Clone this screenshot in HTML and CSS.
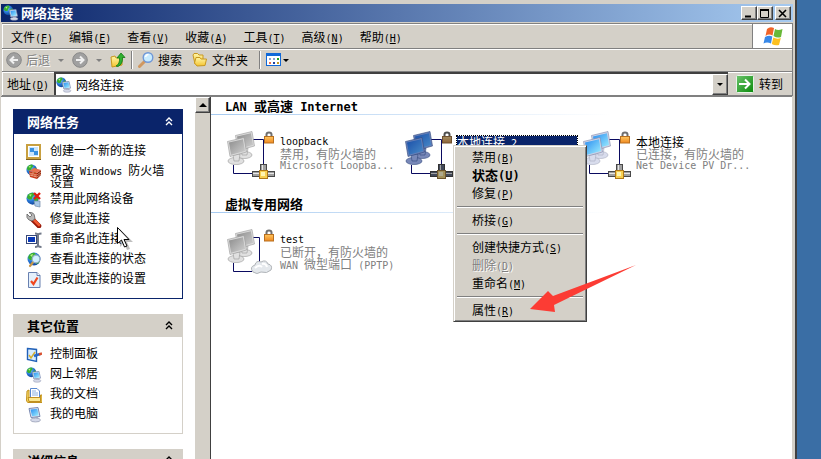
FILE: index.html
```html
<!DOCTYPE html>
<html lang="zh-CN">

<head>
    <meta charset="UTF-8">
    <meta name="viewport" content="width=device-width, initial-scale=1.0">
    <title>网络连接</title>
    <link rel="stylesheet" href="styles.css">
</head>

<body>
    <svg class="defs" width="0" height="0" aria-hidden="true">
        <defs>
            <radialGradient id="g-globe" cx="35%" cy="30%" r="80%">
                <stop offset="0" stop-color="#8fd4ff" />
                <stop offset="0.5" stop-color="#2878d8" />
                <stop offset="1" stop-color="#0b3a8c" />
            </radialGradient>
            <linearGradient id="g-on" x1="0" y1="0" x2="1" y2="1">
                <stop offset="0" stop-color="#2a8cf0" />
                <stop offset="1" stop-color="#9ff0ff" />
            </linearGradient>
            <linearGradient id="g-off" x1="0" y1="0" x2="1" y2="1">
                <stop offset="0" stop-color="#8c8c8c" />
                <stop offset="1" stop-color="#d0d0d0" />
            </linearGradient>
            <linearGradient id="g-sel" x1="0" y1="0" x2="1" y2="1">
                <stop offset="0" stop-color="#1a4ea8" />
                <stop offset="1" stop-color="#4a8cc8" />
            </linearGradient>
            <linearGradient id="g-lock" x1="0" y1="0" x2="0" y2="1">
                <stop offset="0" stop-color="#ffc860" />
                <stop offset="1" stop-color="#f08820" />
            </linearGradient>
            <linearGradient id="g-folder" x1="0" y1="0" x2="0" y2="1">
                <stop offset="0" stop-color="#fff6a8" />
                <stop offset="1" stop-color="#f4c430" />
            </linearGradient>
            <linearGradient id="g-go" x1="0" y1="0" x2="1" y2="1">
                <stop offset="0" stop-color="#6cc46c" />
                <stop offset="1" stop-color="#0a8a0a" />
            </linearGradient>
            <symbol id="globe" viewBox="0 0 16 16">
                <circle cx="7" cy="7" r="6.5" fill="url(#g-globe)" />
                <path d="M2 3Q5 0 8 1L9 3 7 5 6 8 3 8 1 6ZM9 7L12 4 13 7 12 11 9 12Z" fill="#38b030" />
                <path d="M3 3L6 2 5 5Z" fill="#b8f080" />
            </symbol>
            <symbol id="pc" viewBox="0 0 16 16">
                <path d="M3 1.500L12 0.500 14 9.500 5 10.500Z" fill="#e4e8f4" stroke="#7888b0" />
                <path d="M4.500 2.500L11.300 1.800 12.800 8.500 6 9.300Z" fill="url(#g-on)" />
                <path d="M8 10L12 10 12 12 8 12Z" fill="#a8b0c8" />
                <ellipse cx="9.500" cy="13" rx="5" ry="2" fill="#d4d8e8" stroke="#8890a8" stroke-width="0.6" />
            </symbol>
            <symbol id="net" viewBox="0 0 16 16">
                <use href="#globe" width="12" height="12" />
                <use href="#pc" x="4" y="4" width="12" height="12" />
            </symbol>
            <!-- one monitor of the big adapter icon, coloured from the css -->
            <symbol id="monitor" viewBox="0 0 20 28">
                <ellipse cx="9" cy="24" rx="8" ry="3.600" class="base" />
                <path d="M6 18L13 17 12 24 7 24Z" class="base" />
                <path d="M0.500 4.500L17 0.500 19.500 15 3 19.500Z" class="frame" />
                <path d="M2 5.500L16 2.200 18 14 4 17.700Z" class="screen" />
            </symbol>
            <symbol id="monitors" viewBox="0 0 50 52">
                <use href="#monitor" x="8" y="0" width="20" height="28" />
                <use href="#monitor" x="0" y="6" width="20" height="28" />
            </symbol>
            <symbol id="pair" viewBox="0 0 50 52">
                <path d="M26 8.500H36.500V36M6.500 34V42.500H25" class="wire" />
                <use href="#monitors" width="50" height="52" />
            </symbol>
            <symbol id="lock" viewBox="0 0 10 13">
                <path d="M2.500 6V3.500Q2.500 1.500 5 1.500T7.500 3.500V6" fill="none" stroke="#707070" stroke-width="2" />
                <rect x="0.500" y="5.500" width="9" height="6.500" fill="url(#g-lock)" stroke="#b87020" />
            </symbol>
            <symbol id="plug" viewBox="0 0 24 16">
                <rect x="8.500" y="0.500" width="6" height="8" class="metal" />
                <rect x="0.500" y="7.500" width="22" height="5" class="metal" />
                <path d="M1 9.500H22M10.500 1V7" class="shine" />
                <rect x="7.500" y="6.500" width="8" height="8" fill="#f8d050" stroke="#b07818" />
                <rect x="9" y="8" width="4" height="4" fill="#fff4b0" />
            </symbol>
        </defs>
    </svg>

    <div class="window">
        <header class="title">
            <svg class="i16"><use href="#net" /></svg>
            <h1>网络连接</h1>
            <div class="title-btns">
                <button type="button" aria-label="最小化"><svg width="10" height="9"><path d="M1 7.500H7" stroke="#000" stroke-width="2" /></svg></button>
                <button type="button" aria-label="最大化"><svg width="10" height="9"><path d="M0.500 0V8.500H8.500V0M0 1H9" fill="none" stroke="#000" /><path d="M0 1H9" stroke="#000" stroke-width="2" /></svg></button>
                <button type="button" class="close" aria-label="关闭"><svg width="10" height="9"><path d="M1 1L8 8M8 1L1 8" stroke="#000" stroke-width="1.6" /></svg></button>
            </div>
        </header>

        <div class="menubar">
            <nav>
                <a href="#">文件<span class="en">(<u>F</u>)</span></a>
                <a href="#">编辑<span class="en">(<u>E</u>)</span></a>
                <a href="#">查看<span class="en">(<u>V</u>)</span></a>
                <a href="#">收藏<span class="en">(<u>A</u>)</span></a>
                <a href="#">工具<span class="en">(<u>T</u>)</span></a>
                <a href="#">高级<span class="en">(<u>N</u>)</span></a>
                <a href="#">帮助<span class="en">(<u>H</u>)</span></a>
            </nav>
            <div class="flag">
                <svg width="20" height="20" viewBox="0 0 20 20">
                    <path d="M4 3Q7 0 11 2L9.500 9.500Q6 7.500 2.500 10Z" fill="#f06428" />
                    <path d="M12 3Q15 5 19.500 3L18 11Q14 12.500 10.500 10Z" fill="#68b838" />
                    <path d="M2 11Q6 9 9.300 10.500L8 17.500Q4 15.500 0.500 17.500Z" fill="#3888e8" />
                    <path d="M10.300 11.500Q14 13.500 17.800 12L16 19Q12 20 8.800 18Z" fill="#fcc020" />
                </svg>
            </div>
        </div>

        <div class="toolbar">
            <button type="button" class="disabled" disabled>
                <svg class="i16" viewBox="0 0 16 16"><circle cx="8" cy="8" r="7.300" fill="#a0a0a0" stroke="#888" /><path d="M12 8H5M8 4.500L4.500 8 8 11.500" fill="none" stroke="#f0f0f0" stroke-width="2" /></svg>
                <span>后退</span>
            </button>
            <i class="drop grey"></i>
            <button type="button" class="fwd" disabled aria-label="前进">
                <svg class="i16" viewBox="0 0 16 16"><circle cx="8" cy="8" r="7.300" fill="#a0a0a0" stroke="#888" /><path d="M4 8H11M8 4.500L11.500 8 8 11.500" fill="none" stroke="#f0f0f0" stroke-width="2" /></svg>
            </button>
            <i class="drop grey"></i>
            <button type="button" class="up" aria-label="向上">
                <svg class="i16" viewBox="0 0 16 16">
                    <path d="M1 5L5 4 6 6 12 5 12 13 2 15Z" fill="url(#g-folder)" stroke="#c89820" />
                    <path d="M6 14Q10 12 9.500 6H7L11 1 15 5.500H12.500Q13 12 8 14.500Z" fill="#30b030" stroke="#107810" stroke-width="0.8" />
                </svg>
            </button>
            <i class="sep"></i>
            <button type="button" class="search">
                <svg class="i16" viewBox="0 0 16 16"><path d="M7 9L1.500 14.500" stroke="#d09860" stroke-width="3" stroke-linecap="round" /><circle cx="10" cy="5.500" r="4.800" fill="#c8ecff" stroke="#7098d8" stroke-width="1.400" /><path d="M7.500 5Q8 2.500 10.500 2.500" fill="none" stroke="#fff" stroke-width="1.500" /></svg>
                <span>搜索</span>
            </button>
            <button type="button" class="folders">
                <svg class="i16" viewBox="0 0 16 16">
                    <path d="M1 3L2 1.500H5.500L7 3H11V10L3 12Z" fill="url(#g-folder)" stroke="#c89820" />
                    <path d="M4 5.500H8L9 7H14.500L13 13.500 5 14 2.500 11Z" fill="url(#g-folder)" stroke="#c89820" />
                </svg>
                <span>文件夹</span>
            </button>
            <i class="sep"></i>
            <button type="button" class="view" aria-label="查看方式">
                <svg class="i16" viewBox="0 0 16 16">
                    <rect x="0.500" y="1.500" width="14" height="12" fill="#fff" stroke="#1068d8" />
                    <rect x="0" y="1" width="15" height="3" fill="#1068d8" />
                    <path d="M3 6h2v2h-2zM7 6h2v2h-2z" fill="#88a0d0" />
                    <path d="M11 6h2v2h-2z" fill="#20a020" />
                    <path d="M3 10h2v2h-2z" fill="#f07050" />
                    <path d="M7 10h2v2h-2z" fill="#2040a0" />
                    <path d="M11 10h2v2h-2z" fill="#c89820" />
                </svg>
                <i class="drop"></i>
            </button>
        </div>

        <div class="address">
            <label for="addr">地址<span class="en">(<u>D</u>)</span></label>
            <div class="combo">
                <svg class="i16"><use href="#net" /></svg>
                <input id="addr" type="text" value="网络连接">
                <button type="button" aria-label="展开"><i class="drop"></i></button>
            </div>
            <button type="button" class="go">
                <svg width="18" height="18" viewBox="0 0 18 18"><rect x="0.500" y="0.500" width="17" height="17" rx="1" fill="url(#g-go)" stroke="#e8f4e8" /><path d="M3 9H14M9 4.500L13.500 9 9 13.500" fill="none" stroke="#fff" stroke-width="2" /></svg>
                <span>转到</span>
            </button>
        </div>

        <div class="content">
            <aside class="side">
                <section class="panel main">
                    <h2>网络任务 <svg width="8" height="9"><path d="M1 4L4 1 7 4M1 8L4 5 7 8" /></svg></h2>
                    <ul>
                        <li><svg class="i16" viewBox="0 0 16 16"><rect x="1" y="1" width="13" height="13" fill="#fff" stroke="#c8a040" stroke-width="2" /><rect x="3" y="3" width="9" height="9" fill="#c8e4fc" /><path d="M4 4h4v4h-4zM8 7h4v4h-4z" fill="#3890e0" /><path d="M0 15.500H15" stroke="#806020" /></svg><a href="#">创建一个新的连接</a></li>
                        <li><svg class="i16" viewBox="0 0 16 16"><use href="#globe" width="13" height="13" /><path d="M3 7L11 9 11 15 4 13Z" fill="#c83818" /><path d="M11 9L15 6 15 11 11 15Z" fill="#902008" /><path d="M3 7L8 4 15 6 11 9Z" fill="#e87050" /><path d="M3 9L11 11 15 8M4 11L11 13 15 10M7 8V10M9 11V13M6 10V12" stroke="#f0b898" stroke-width="0.7" fill="none" /></svg><a href="#">更改<span class="en"> Windows </span>防火墙设置</a></li>
                        <li><svg class="i16" viewBox="0 0 16 16"><use href="#globe" width="15" height="15" /><path d="M8 9L14 9 14 15 9 14Z" fill="#a8c8e8" stroke="#7088a8" stroke-width="0.7" /><path d="M8 1L14 7M14 1L8 7" stroke="#e02010" stroke-width="2.400" /></svg><a href="#">禁用此网络设备</a></li>
                        <li><svg class="i16" viewBox="0 0 16 16"><path d="M6 7L13 14" stroke="#981808" stroke-width="4.600" stroke-linecap="round" /><path d="M7 7L13 13" stroke="#f05830" stroke-width="2.600" stroke-linecap="round" /><path d="M1 2L4 5 6 3 3 0.500Q8 0 8.500 4L9 7 6 9 3 8Q0 6 1 2Z" fill="#b8b8b8" stroke="#606060" stroke-width="0.8" /></svg><a href="#">修复此连接</a></li>
                        <li><svg class="i16" viewBox="0 0 16 16"><rect x="0.500" y="3.500" width="10" height="8" fill="#fff" stroke="#384878" /><rect x="2" y="5" width="7" height="5" fill="#0838b8" /><path d="M9 1.500Q12 1.500 12 3Q12 1.500 15.500 1.500M12 2V14M9 15Q12 15 12 13Q12 15 15.500 15" fill="none" stroke="#707888" stroke-width="2" /></svg><a href="#">重命名此连接</a></li>
                        <li><svg class="i16" viewBox="0 0 16 16"><use href="#globe" x="1" width="16" height="16" /><path d="M8 9L4 14" stroke="#c89848" stroke-width="2.200" stroke-linecap="round" /><circle cx="10" cy="7" r="3.800" fill="#d0f0ff" stroke="#98b0c8" stroke-width="1.200" /></svg><a href="#">查看此连接的状态</a></li>
                        <li><svg class="i16" viewBox="0 0 16 16"><path d="M2.500 0.500H11L14 3.500V15.500H2.500Z" fill="#e4f0fc" stroke="#6880b0" /><path d="M11 0.500V3.500H14" fill="#fff" stroke="#6880b0" /><path d="M5 9L7.500 12 11.500 5.500" fill="none" stroke="#f04820" stroke-width="2.200" /></svg><a href="#">更改此连接的设置</a></li>
                    </ul>
                </section>
                <section class="panel">
                    <h2>其它位置 <svg width="8" height="9"><path d="M1 4L4 1 7 4M1 8L4 5 7 8" /></svg></h2>
                    <ul>
                        <li><svg class="i16" viewBox="0 0 16 16"><path d="M1.500 1.500L10.500 2.500V14.500L1.500 12.500Z" fill="#d8ecff" stroke="#2060b8" stroke-width="1.400" /><path d="M3 8L5 11 9 5" fill="none" stroke="#d8b030" stroke-width="1.500" /><path d="M8 9L14 7" stroke="#2868c8" stroke-width="2.400" /><path d="M13 7.500L16 6.500" stroke="#d85030" stroke-width="2.400" /></svg><a href="#">控制面板</a></li>
                        <li><svg class="i16"><use href="#net" /></svg><a href="#">网上邻居</a></li>
                        <li><svg class="i16" viewBox="0 0 16 16"><path d="M1 4L3 3V14.500H14.500V8H16V15.500H2Q0.500 15 0.500 13Z" fill="#f8d860" stroke="#c09020" /><path d="M4.500 1.500H11L13.500 4V10.500H4.500Z" fill="#fff" stroke="#5888d0" /><path d="M6 4H10M6 6H12M6 8H12" stroke="#88b0e0" /><path d="M2 10.500H14.500V14.500H3Z" fill="#fce890" stroke="#c09020" /></svg><a href="#">我的文档</a></li>
                        <li><svg class="i16"><use href="#pc" /></svg><a href="#">我的电脑</a></li>
                    </ul>
                </section>
                <section class="panel">
                    <h2>详细信息 <svg width="8" height="9"><path d="M1 4L4 1 7 4M1 8L4 5 7 8" /></svg></h2>
                </section>
            </aside>
            <div class="scroll">
                <button type="button" aria-label="向上滚动"><i class="drop rise"></i></button>
            </div>
            <main class="list">
                <h2><span class="en">LAN </span>或高速<span class="en"> Internet</span></h2>
                <div class="row">
                    <div class="conn off">
                        <svg class="big" viewBox="0 0 50 52"><use href="#pair" width="50" height="52" /><use href="#lock" x="37" y="0" width="10" height="13" /><use href="#plug" x="25" y="33" width="24" height="16" /></svg>
                        <div class="info">
                            <p class="name en">loopback</p>
                            <p>禁用，有防火墙的</p>
                            <p class="en">Microsoft Loopba...</p>
                        </div>
                    </div>
                    <div class="conn sel">
                        <svg class="big" viewBox="0 0 50 52"><use href="#pair" width="50" height="52" /><g class="dim"><use href="#lock" x="37" y="0" width="10" height="13" /><use href="#plug" x="25" y="33" width="24" height="16" /></g></svg>
                        <div class="info">
                            <p class="name">本地连接<span class="en"> 2</span></p>
                        </div>
                    </div>
                    <div class="conn on">
                        <svg class="big" viewBox="0 0 50 52"><use href="#pair" width="50" height="52" /><use href="#lock" x="37" y="0" width="10" height="13" /><use href="#plug" x="25" y="33" width="24" height="16" /></svg>
                        <div class="info">
                            <p class="name">本地连接</p>
                            <p>已连接，有防火墙的</p>
                            <p class="en">Net Device PV Dr...</p>
                        </div>
                    </div>
                </div>
                <h2>虚拟专用网络</h2>
                <div class="row">
                    <div class="conn off">
                        <svg class="big" viewBox="0 0 50 52">
                            <path d="M26 8.500H32.500V36M6.500 34V42.500H25" class="wire" />
                            <use href="#monitors" width="50" height="52" />
                            <use href="#lock" x="37" y="0" width="10" height="13" />
                            <path d="M26 43Q22 38 28 36Q29 31 34 33Q39 30 41 35Q46 36 44 41Q40 45 34 43Q30 46 26 43Z" fill="#e4e8ec" stroke="#b0b4b8" />
                            <path d="M28 39Q32 35 35 38M35 35Q39 34 40 38" fill="none" stroke="#fff" stroke-width="2" />
                        </svg>
                        <div class="info">
                            <p class="name en">test</p>
                            <p>已断开，有防火墙的</p>
                            <p><span class="en">WAN </span>微型端口<span class="en"> (PPTP)</span></p>
                        </div>
                    </div>
                </div>
            </main>
        </div>
    </div>

    <div class="popup" role="menu">
        <button type="button" role="menuitem">禁用<span class="en">(<u>B</u>)</span></button>
        <button type="button" role="menuitem" class="bold">状态<span class="en">(<u>U</u>)</span></button>
        <button type="button" role="menuitem">修复<span class="en">(<u>P</u>)</span></button>
        <hr>
        <button type="button" role="menuitem">桥接<span class="en">(<u>G</u>)</span></button>
        <hr>
        <button type="button" role="menuitem">创建快捷方式<span class="en">(<u>S</u>)</span></button>
        <button type="button" role="menuitem" disabled>删除<span class="en">(<u>D</u>)</span></button>
        <button type="button" role="menuitem">重命名<span class="en">(<u>M</u>)</span></button>
        <hr>
        <button type="button" role="menuitem">属性<span class="en">(<u>R</u>)</span></button>
    </div>

    <svg class="arrow" width="108" height="48" viewBox="0 0 108 48"><path d="M0 44L18 26 23 31 106 0 24 40 25 47Z" fill="#fc3c34" /></svg>
    <svg class="cursor" width="18" height="24" viewBox="0 0 18 24"><path d="M3 2V20L7 16 10 23 13 22 10 15H16Z" fill="#000" opacity="0.250" /><path d="M0.500 0.500V16.500L4.500 13 7.500 20 10 19 7 12.500H12Z" fill="#fff" stroke="#000" /></svg>
</body>

</html>
```

FILE: styles.css
```css
* {
    margin: 0;
    padding: 0;
    box-sizing: border-box;
}

body {
    display: flex;
    height: 100vh;
    overflow: hidden;
    padding-right: 24px;
    background-color: #3a6ea5;
    color: #000;
    font: 12px/12px "Noto Sans CJK SC", sans-serif;
}

button,
input {
    font: inherit;
    color: inherit;
    border: none;
    background: none;
}

a {
    color: inherit;
    text-decoration: none;
}

ul {
    list-style: none;
}

svg {
    flex: none;
}

.defs {
    position: absolute;
}

.i16 {
    width: 16px;
    height: 16px;
}

.en {
    font-family: "DejaVu Sans Mono", monospace;
    font-size: 10px;
    line-height: 0;
    white-space: pre;
}

.window {
    flex: 1;
    min-width: 0;
    display: flex;
    flex-direction: column;
    background-color: #d4d0c8;
    border-right: 2px solid #404040;
    padding: 4px 2px 0 1px;
}

/* title bar */
.title {
    display: flex;
    align-items: center;
    height: 18px;
    padding: 0 2px;
    color: #fff;
    background: linear-gradient(to right, #0a246a, #a6caf0);
}

.title h1 {
    flex: 1;
    margin-left: 2px;
    font-size: 13px;
}

.title-btns {
    display: flex;
}

.title-btns button,
.combo button,
.scroll button {
    display: flex;
    align-items: center;
    justify-content: center;
    width: 16px;
    height: 14px;
    background-color: #d4d0c8;
    border: 1px solid;
    border-color: #fff #404040 #404040 #fff;
    box-shadow: inset -1px -1px #808080;
}

.title-btns .close {
    margin-left: 2px;
}

/* bars */
.menubar,
.toolbar,
.address {
    display: flex;
    align-items: center;
    height: 24px;
    margin-left: 1px;
    border: 1px solid #808080;
    border-width: 0 1px 1px 0;
    box-shadow: inset 1px 1px #fff;
}

.menubar {
    height: 26px;
    margin-top: 1px;
    border-top-width: 1px;
}

.menubar nav {
    flex: 1;
    display: flex;
    gap: 16px;
    padding: 2px 0 0 9px;
}

.flag {
    display: flex;
    align-items: center;
    justify-content: center;
    width: 40px;
    height: 100%;
    background-color: #fff;
    border-left: 1px solid #808080;
}

.toolbar {
    height: 23px;
    padding-left: 4px;
}

.toolbar button {
    display: flex;
    align-items: center;
    gap: 4px;
}

.disabled span,
.popup button:disabled {
    color: #808080;
    text-shadow: 1px 1px #fff;
}

.drop {
    border: 3px solid transparent;
    border-top-color: #000;
    border-bottom: none;
}

.drop.grey {
    margin: 0 8px;
    border-top-color: #808080;
}

.drop.rise {
    border: 4px solid transparent;
    border-bottom-color: #000;
    border-top: none;
}

.sep {
    width: 2px;
    height: 18px;
    margin: 0 5px;
    background-color: #808080;
    border-right: 1px solid #fff;
}

.toolbar .folders {
    margin: 0 6px 0 10px;
}

.toolbar .view {
    gap: 1px;
}

.address label {
    padding: 0 5px;
}

.combo {
    flex: 1;
    display: flex;
    align-items: center;
    height: 100%;
    background-color: #fff;
    border: 1px solid #404040;
    border-width: 2px 0 0 2px;
}

.combo input {
    flex: 1;
    min-width: 0;
    padding-left: 4px;
    outline: none;
}

.combo button {
    height: 100%;
}

.go {
    display: flex;
    align-items: center;
    gap: 5px;
    margin-left: 8px;
    padding-right: 9px;
}

/* content */
.content {
    flex: 1;
    min-height: 0;
    display: flex;
    margin-right: 1px;
    background-color: #fff;
    border-top: 1px solid #808080;
}

.side {
    width: 194px;
    padding: 12px 12px 0;
    overflow: hidden;
}

.panel {
    margin-bottom: 15px;
    border: 1px solid #d4d0c8;
    border-top: none;
}

.panel h2 {
    display: flex;
    align-items: center;
    justify-content: space-between;
    height: 23px;
    padding: 0 9px 0 13px;
    background-color: #d4d0c8;
    font-size: 13px;
}

.panel h2 path {
    fill: none;
    stroke: #000;
    stroke-width: 1.4;
}

.panel ul {
    display: flex;
    flex-direction: column;
    gap: 4px;
    padding: 10px 12px;
}

.panel li {
    display: flex;
    gap: 8px;
    min-height: 16px;
}

.panel.main {
    border-color: #0a246a;
}

.panel.main h2 {
    height: 25px;
    background-color: #0a246a;
    color: #fff;
}

.panel.main h2 path {
    stroke: #fff;
}

.scroll {
    width: 16px;
    background-color: #d4d0c8;
    border-right: 1px solid #404040;
}

.scroll button {
    width: 15px;
    height: 16px;
}

.list {
    flex: 1;
    min-width: 0;
}

.list h2 {
    height: 18px;
    padding: 3px 0 0 14px;
    font-size: 13px;
    background: linear-gradient(to right, #a6caf0, #fff 400px) bottom / 100% 1px no-repeat;
}

.list h2 .en {
    font-size: 12px;
}

.row {
    display: flex;
    height: 80px;
    padding: 16px 0 0 16px;
}

.conn {
    display: flex;
    width: 178px;
    flex: none;
}

.big {
    width: 50px;
    height: 52px;
}

.info {
    flex: 1;
    padding: 5px 6px 0 3px;
    color: #808080;
}

.info p {
    height: 12px;
    line-height: 12px;
    white-space: nowrap;
}

.info .name {
    color: #000;
}

.sel .info .name {
    margin-left: -1px;
    background-color: #0a246a;
    color: #fff;
    outline: 1px dotted #000;
}

/* adapter icons */
.off {
    --screen: url(#g-off);
    --frame: #dcdcdc;
    --edge: #989898;
    --base: #e0e0e0;
}

.sel {
    --screen: url(#g-sel);
    --frame: #6880b8;
    --edge: #30487c;
    --base: #7888b8;
    --metal: #586890;
}

.wire {
    fill: none;
    stroke: #0a0a60;
}

.screen {
    fill: var(--screen, url(#g-on));
}

.frame {
    fill: var(--frame, #d0d4e8);
    stroke: var(--edge, #8088a8);
    stroke-width: 0.6;
}

.base {
    fill: var(--base, #d8dcec);
    stroke: var(--edge, #a8acc0);
    stroke-width: 0.6;
}

.metal {
    fill: var(--metal, #a0a0a0);
    stroke: #484848;
}

.shine {
    stroke: #e8e8e8;
}

.dim {
    filter: brightness(0.7) saturate(0.6);
}

/* context menu */
.popup {
    position: absolute;
    left: 453px;
    top: 145px;
    display: flex;
    flex-direction: column;
    width: 134px;
    padding: 2px;
    background-color: #d4d0c8;
    border: 1px solid;
    border-color: #d4d0c8 #404040 #404040 #d4d0c8;
    box-shadow: inset 1px 1px #fff, inset -1px -1px #808080;
}

.popup button {
    height: 18px;
    padding-left: 16px;
    text-align: left;
}

.popup .bold {
    font-size: 13px;
    font-weight: bold;
}

.bold .en {
    font-size: 12px;
}

.popup hr {
    margin: 4px 1px 3px;
    border: 1px solid;
    border-color: #808080 transparent #fff;
    border-width: 1px 0;
}

.arrow {
    position: absolute;
    left: 530px;
    top: 265px;
}

.cursor {
    position: absolute;
    left: 117px;
    top: 227px;
}
```
